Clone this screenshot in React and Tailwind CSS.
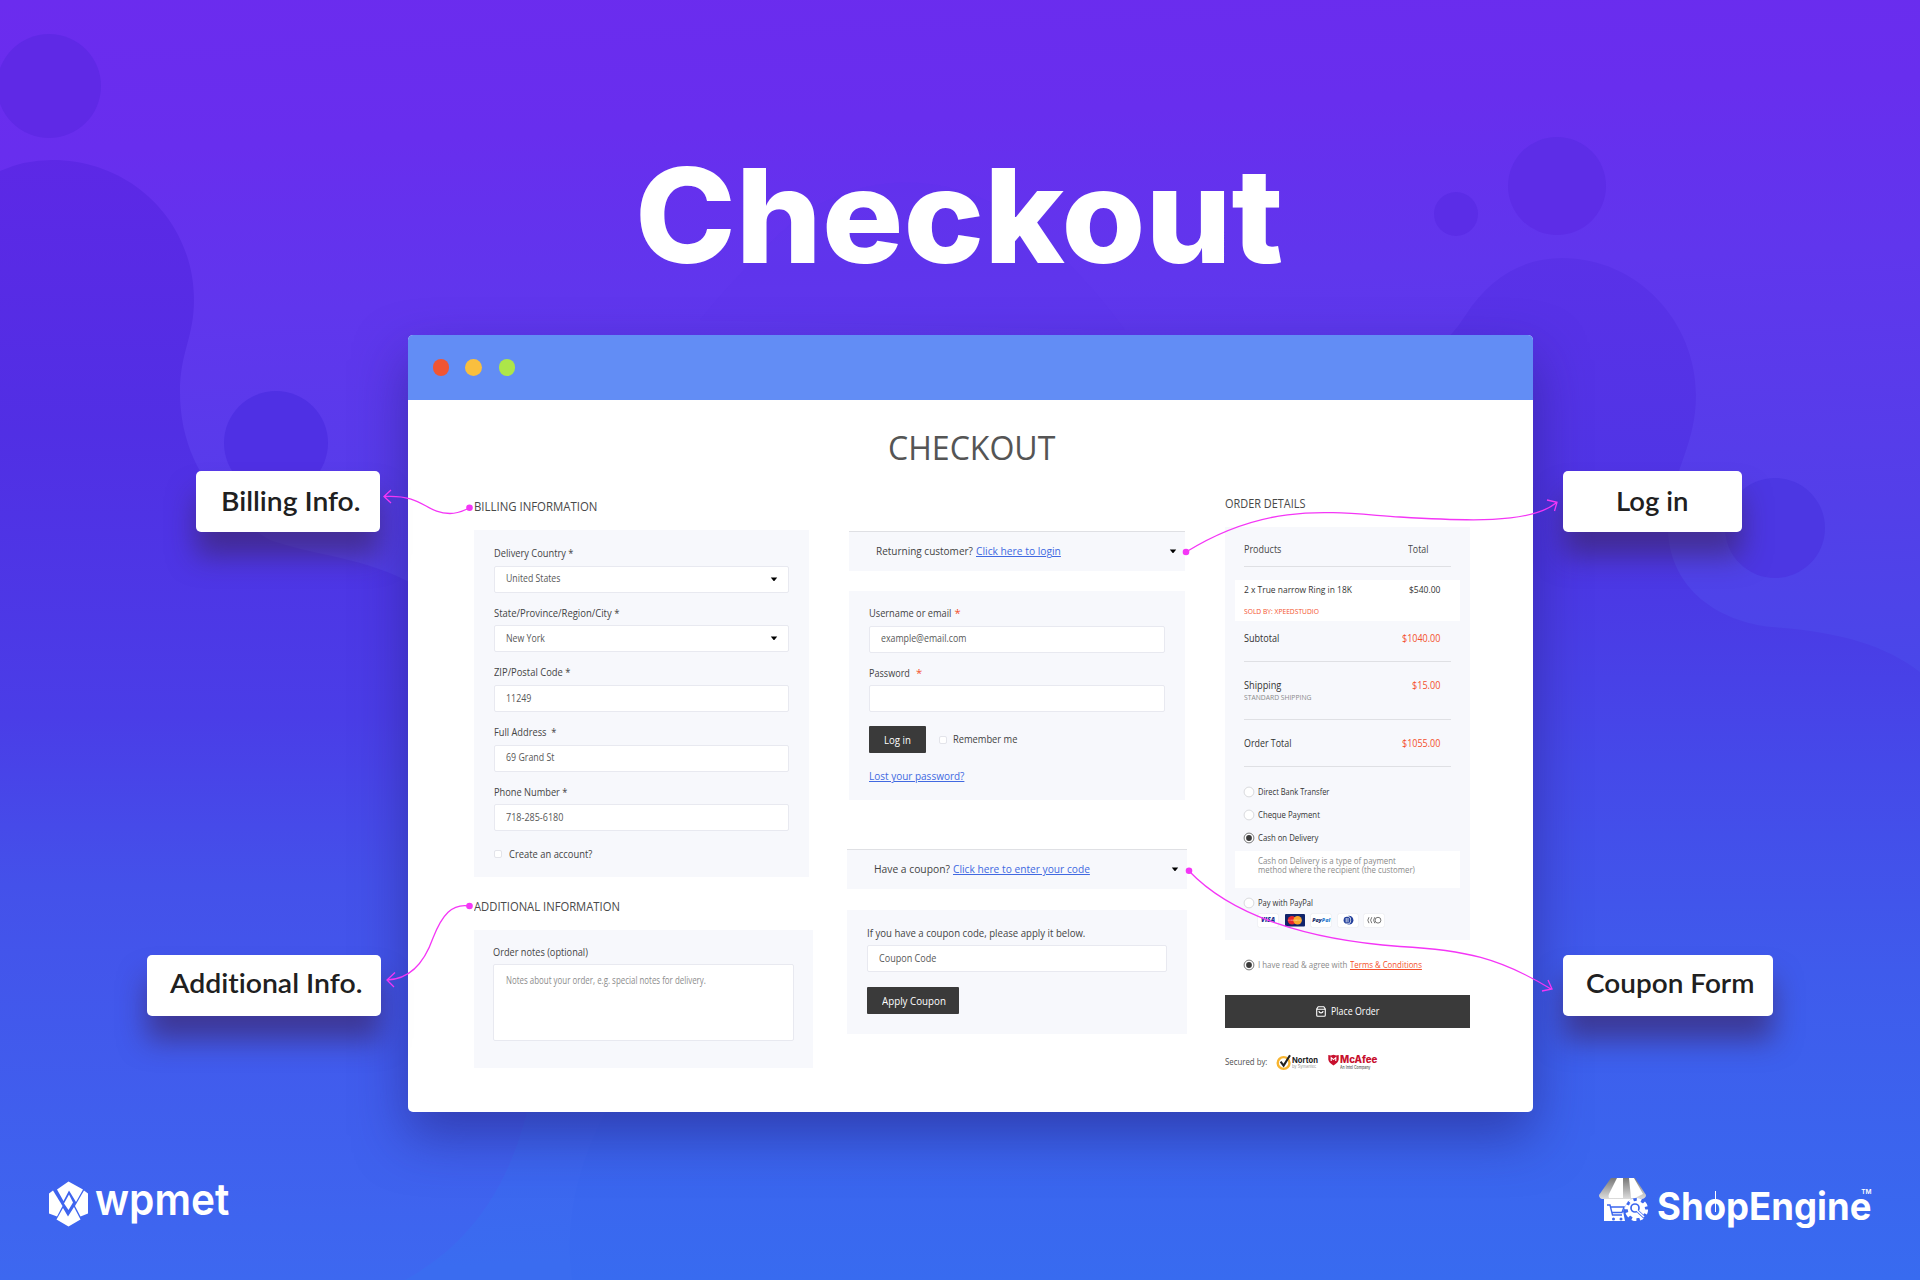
import { useLayoutEffect, useRef } from "react";

const SANS = "font-['Open_Sans','Noto_Sans',sans-serif]";

// One line of text, condensed or widened so that it spans `w` pixels.
function Fit({ w, className = "", innerClass = "", children }) {
  const outer = useRef(null);
  const inner = useRef(null);
  useLayoutEffect(() => {
    const span = w - 0.6;
    inner.current.style.transform = "none";
    const natural = inner.current.getBoundingClientRect().width;
    outer.current.style.width = `${span}px`;
    inner.current.style.transform = `scaleX(${span / natural})`;
  }, [w]);
  return (
    <span ref={outer} className={`inline-block text-left whitespace-pre ${className}`}>
      <span ref={inner} className={`inline-block origin-left ${innerClass}`}>
        {children}
      </span>
    </span>
  );
}

function Caret({ className = "" }) {
  return (
    <svg viewBox="0 0 8 5" className={`h-[5px] w-2 ${className}`}>
      <path d="M.8.6h6.4L4.6 3.8q-.6.6-1.2 0z" fill="#000" />
    </svg>
  );
}

function Input({ value, w, select, className = "w-[296px]" }) {
  return (
    <div
      className={`flex h-[27px] items-center rounded-[2px] border border-[#e8e9f0] bg-white pr-[10px] pl-[11px] text-[10.2px] text-[#585858] ${className}`}
    >
      {value && <Fit w={w}>{value}</Fit>}
      {select && <Caret className="ml-auto" />}
    </div>
  );
}

function Field({ label, lw, star, gap = 3, inputClass, ...rest }) {
  return (
    <div className="h-[59.7px]">
      <div className="flex h-6 items-center text-[11.2px] text-[#444]">
        <Fit w={lw}>{label}</Fit>
        {star && (
          <span className="text-[#f4512c]" style={{ marginLeft: gap }}>
            *
          </span>
        )}
      </div>
      <Input {...rest} className={inputClass} />
    </div>
  );
}

function Check({ className = "" }) {
  return <span className={`size-[8px] rounded-[2px] border border-[#e3e4ea] bg-white ${className}`} />;
}

function Toggle({ text, tw, link, lw, className = "" }) {
  return (
    <div
      className={`flex h-10 items-center border-t border-[#dfe0e4] bg-[#f7f8fc] pb-px text-[11.5px] text-[#444] ${className}`}
    >
      <Fit w={tw}>{text}</Fit>
      <Fit w={lw} className="ml-[3.5px] text-[#4169e1]" innerClass="underline underline-offset-1">
        {link}
      </Fit>
      <Caret className="mr-[8.5px] ml-auto" />
    </div>
  );
}

function Radio({ on }) {
  return (
    <svg viewBox="0 0 12 12" className="size-3 shrink-0">
      <circle cx="6" cy="6" r="4.9" fill="#fff" stroke={on ? "#555" : "#cfd0d4"} strokeWidth=".8" />
      {on && <circle cx="6" cy="6" r="2.9" fill="#3a3a3a" />}
    </svg>
  );
}

function PayOption({ label, w, on }) {
  return (
    <div className="flex h-[23px] items-center gap-[3px] pl-[18px] text-[9.8px] text-[#333]">
      <Radio on={on} />
      <Fit w={w} className="pt-[1px]">
        {label}
      </Fit>
    </div>
  );
}

function Amount({ w, children }) {
  return (
    <Fit w={w} className="mr-[11px] text-[#f4512c]">
      {children}
    </Fit>
  );
}

function LeftColumn() {
  return (
    <section className="w-[339px]">
      <h2 className="flex h-[25px] items-center text-[12.8px] text-[#484848]">
        <Fit w={124}>BILLING INFORMATION</Fit>
      </h2>
      <div className="mt-[11px] h-[347px] w-[335px] bg-[#f7f8fc] pt-[11.5px] pl-5">
        <Field label="Delivery Country *" lw={80} value="United States" w={55} select inputClass="w-[295px]" />
        <Field label="State/Province/Region/City *" lw={126} value="New York" w={39.5} select inputClass="w-[295px]" />
        <Field label="ZIP/Postal Code *" lw={77} value="11249" w={26} inputClass="w-[295px]" />
        <Field label="Full Address  *" lw={63} value="69 Grand St" w={49} inputClass="w-[295px]" />
        <Field label="Phone Number *" lw={74} value="718-285-6180" w={58} inputClass="w-[295px]" />
        <div className="flex h-7 items-center gap-[6.5px] text-[11.2px] text-[#444]">
          <Check />
          <Fit w={84}>Create an account?</Fit>
        </div>
      </div>
      <h2 className="flex h-[53px] items-center pt-[6px] text-[12.8px] text-[#484848]">
        <Fit w={146.5}>ADDITIONAL INFORMATION</Fit>
      </h2>
      <div className="h-[138px] bg-[#f7f8fc] pt-[11px] pl-[19px]">
        <div className="flex h-[23px] items-center text-[11.2px] text-[#444]">
          <Fit w={95.5}>Order notes (optional)</Fit>
        </div>
        <div className="h-[77px] w-[301px] rounded-[2px] border border-[#e8e9f0] bg-white pt-[5px] pl-[12px] text-[10px] leading-5 text-[#8c8c8c]">
          <Fit w={200.5}>Notes about your order, e.g. special notes for delivery.</Fit>
        </div>
      </div>
    </section>
  );
}

function MiddleColumn() {
  return (
    <section className="ml-[34px] w-[340px] pt-[37px]">
      <Toggle
        text="Returning customer?"
        tw={97.5}
        link="Click here to login"
        lw={85.5}
        className="mx-[2px] pl-[26.5px]"
      />
      <div className="mx-[2px] mt-5 h-[209px] bg-[#f7f8fc] pt-[10.5px] pl-5">
        <Field label="Username or email" lw={83} star value="example@email.com" w={86} inputClass="w-[296px]" />
        <Field label="Password" lw={41.5} star gap={6} inputClass="w-[296px]" />
        <div className="mt-[5.4px] flex h-[26.5px] items-center text-[11.2px] text-[#444]">
          <button className="h-full w-[57px] rounded-[1px] bg-[#3a3a3a] text-[11.4px] text-white">
            <Fit w={27.5}>Log in</Fit>
          </button>
          <Check className="mr-[6px] ml-[13px]" />
          <Fit w={65}>Remember me</Fit>
        </div>
        <div className="flex h-[46px] items-center text-[11.4px] text-[#4169e1]">
          <Fit w={96} innerClass="underline underline-offset-1">
            Lost your password?
          </Fit>
        </div>
      </div>
      <Toggle
        text="Have a coupon?"
        tw={76.5}
        link="Click here to enter your code"
        lw={137.5}
        className="mt-[49px] pl-[27px]"
      />
      <div className="mt-[20.5px] h-[124px] bg-[#f7f8fc] pt-[11.5px] pl-[20px]">
        <div className="flex h-6 items-center text-[11.2px] text-[#444]">
          <Fit w={219}>If you have a coupon code, please apply it below.</Fit>
        </div>
        <Input value="Coupon Code" w={58} className="w-[300px]" />
        <button className="mt-[15px] h-[26.5px] w-[92px] rounded-[1px] bg-[#3a3a3a] pl-[2px] text-[11.4px] text-white">
          <Fit w={64.5}>Apply Coupon</Fit>
        </button>
      </div>
    </section>
  );
}

function Cards() {
  const card = "h-[12.5px] w-[20px] rounded-[1px] bg-white shadow-[0_0_1px_rgba(0,0,0,0.25)]";
  return (
    <div className="ml-[33px] flex gap-[6.6px]">
      <span
        className={`${card} flex items-center justify-center font-['Open_Sans',sans-serif] text-[6.4px] leading-none font-extrabold text-[#1a2f8f] italic`}
      >
        VISA
      </span>
      <svg viewBox="0 0 20 12.5" className="h-[12.5px] w-[20px]">
        <rect width="20" height="12.5" rx="1" fill="#10246b" />
        <circle cx="7" cy="6.2" r="4.3" fill="#e8252c" />
        <circle cx="12.6" cy="6.2" r="4.3" fill="#f9a72b" />
        <path d="M3.4 6.2h12" stroke="#fff" strokeWidth="1" strokeDasharray=".8 .5" opacity=".6" />
      </svg>
      <span
        className={`${card} flex items-center justify-center font-['Open_Sans',sans-serif] text-[5.4px] leading-none font-extrabold text-[#22316c] italic`}
      >
        Pay<span className="text-[#2f7fd0]">Pal</span>
      </span>
      <svg viewBox="0 0 20 12.5" className={card}>
        <circle cx="11" cy="6.2" r="4.4" fill="#24419c" />
        <circle cx="9" cy="6.2" r="4.1" fill="#fff" />
        <circle cx="9" cy="6.2" r="3.4" fill="#24419c" />
        <path d="M8.2 4v4.4M10 4v4.4" stroke="#fff" strokeWidth=".8" />
      </svg>
      <svg viewBox="0 0 20 12.5" className={card}>
        <g fill="none" stroke="#666" strokeWidth=".9">
          <path d="M5 3.2q-2.4 3 0 6M7.8 3.2q-2.4 3 0 6M10.8 3.2q-2.4 3 0 6" />
          <circle cx="14" cy="6.2" r="2.9" />
        </g>
      </svg>
    </div>
  );
}

function Norton() {
  return (
    <div className="flex items-center">
      <svg viewBox="0 0 17 17" className="size-[17px]">
        <circle cx="7.6" cy="9" r="5.9" fill="none" stroke="#f8b530" strokeWidth="2.4" />
        <path d="M4.6 7.6l3 4L14 1.2" fill="none" stroke="#222" strokeWidth="2.1" />
      </svg>
      <div className="-ml-[1px] flex flex-col items-start font-['Inter',sans-serif]">
        <Fit w={26.5} className="text-[8.2px] leading-[8px] font-bold text-[#222]">
          Norton
        </Fit>
        <Fit w={25} className="text-[4.4px] leading-[5px] text-[#999]">
          by Symantec
        </Fit>
      </div>
    </div>
  );
}

function McAfee() {
  return (
    <div className="ml-[10px] flex items-start">
      <svg viewBox="0 0 11 12" className="h-[12px] w-[11px]">
        <path d="M.3 1l2.600.6L5.500.8l2.600.8L10.700 1v4.600q-.6 3.400-5.200 5.800Q.9 9 .3 5.600z" fill="#c8102e" />
        <path d="M3.2 7V3.600l2.300 2 2.300-2V7" fill="none" stroke="#fff" strokeWidth="1.1" />
      </svg>
      <div className="ml-[1.5px] flex flex-col items-start font-['Inter',sans-serif]">
        <Fit w={38} className="text-[9.8px] leading-[11px] font-extrabold text-[#c8102e]">
          McAfee
        </Fit>
        <Fit w={31} className="text-[4.2px] leading-[5px] font-medium text-[#555]">
          An Intel Company
        </Fit>
      </div>
    </div>
  );
}

function RightColumn() {
  return (
    <section className="ml-[38px] w-[245px]">
      <h2 className="flex h-5 items-center text-[11.8px] text-[#484848]">
        <Fit w={81}>ORDER DETAILS</Fit>
      </h2>
      <div className="mt-[13px] h-[413px] bg-[#f7f8fc] pt-[5px] text-[10.8px] text-[#333]">
        <div className="mx-[19px] flex h-[35px] items-center justify-between border-b border-[#dfe0e4] text-[#484848]">
          <Fit w={38}>Products</Fit>
          <Fit w={21} className="mr-[22.5px]">
            Total
          </Fit>
        </div>
        <div className="mx-[10px] mt-[13px] h-[41px] bg-white px-[9px] pt-[2px]">
          <div className="flex justify-between text-[9.8px] leading-[15px]">
            <Fit w={108.5}>2 x True narrow Ring in 18K</Fit>
            <Fit w={32} className="mr-[11px]">
              $540.00
            </Fit>
          </div>
          <div className="mt-[8px] flex text-[7.8px] leading-[12px] text-[#f4512c]">
            <Fit w={75.5}>SOLD BY: XPEEDSTUDIO</Fit>
          </div>
        </div>
        <div className="mx-[19px] flex h-[41px] items-start justify-between border-b border-[#dfe0e4] pt-[6.6px] leading-5">
          <Fit w={36}>Subtotal</Fit>
          <Amount w={39}>$1040.00</Amount>
        </div>
        <div className="mx-[19px] h-[58px] border-b border-[#dfe0e4] pt-[15.7px] leading-[14px]">
          <div className="flex justify-between">
            <Fit w={38}>Shipping</Fit>
            <Amount w={29}>$15.00</Amount>
          </div>
          <div className="flex text-[7.6px] leading-[11px] text-[#8a8a8a]">
            <Fit w={68}>STANDARD SHIPPING</Fit>
          </div>
        </div>
        <div className="mx-[19px] flex h-[47px] items-center justify-between border-b border-[#dfe0e4]">
          <Fit w={48}>Order Total</Fit>
          <Amount w={39}>$1055.00</Amount>
        </div>
        <div className="mt-[13px]">
          <PayOption label="Direct Bank Transfer" w={72} />
          <PayOption label="Cheque Payment" w={62.5} />
          <PayOption label="Cash on Delivery" w={61} on />
        </div>
        <div className="mx-[10px] mt-[2px] flex h-[37px] flex-col items-start bg-white pt-[4.5px] pl-[23px] text-[9.2px] leading-[9.2px] text-[#8a8a8a]">
          <Fit w={138.5}>Cash on Delivery is a type of payment</Fit>
          <Fit w={157.5}>method where the recipient (the customer)</Fit>
        </div>
        <div className="mt-[3px]">
          <PayOption label="Pay with PayPal" w={55.5} />
        </div>
        <Cards />
      </div>
      <div className="flex h-[50px] items-center gap-[3px] pl-[18px] text-[9.6px] text-[#8a8a8a]">
        <Radio on />
        <span className="flex gap-[2.5px] pt-[1px]">
          <Fit w={90}>I have read &amp; agree with</Fit>
          <Fit w={72.5} className="text-[#f4512c]" innerClass="underline underline-offset-1">
            Terms &amp; Conditions
          </Fit>
        </span>
      </div>
      <button className="mt-[5px] flex h-[33px] w-full items-center justify-center gap-[5.5px] bg-[#3a3a3a] text-[10.4px] text-white">
        <svg viewBox="0 0 10 11" className="h-[11px] w-[10px]" fill="none" stroke="#fff" strokeWidth="1.1">
          <path d="M2.2.8h5.600L9.300 3v6.200q0 1-1 1H1.700q-1 0-1-1V3zM.9 3.200h8.200M3 5q0 1.900 2 1.900T7 5" />
        </svg>
        <Fit w={49}>Place Order</Fit>
      </button>
      <div className="mt-6 flex h-5 items-center text-[9.8px] text-[#505050]">
        <Fit w={43} className="pt-px">
          Secured by:
        </Fit>
        <span className="ml-[8.5px]">
          <Norton />
        </span>
        <McAfee />
      </div>
    </section>
  );
}

function BrowserWindow() {
  return (
    <main
      className={`mt-[48px] ml-[408px] h-[777px] w-[1125px] overflow-hidden rounded-[5px] bg-white ${SANS}`}
    >
      <div className="flex h-[65px] items-center bg-[#628df5] pl-[24.5px]">
        <span className="size-[16.6px] rounded-full bg-[#f15533]" />
        <span className="ml-[16px] size-[16.6px] rounded-full bg-[#f9bf3e]" />
        <span className="ml-[17px] size-[16.6px] rounded-full bg-[#ade649]" />
      </div>
      <h1 className="flex h-[94px] items-center justify-center pl-[3px] text-[33.5px] text-[#555]">
        <Fit w={168}>CHECKOUT</Fit>
      </h1>
      <div className="flex items-start pl-[66px]">
        <LeftColumn />
        <MiddleColumn />
        <RightColumn />
      </div>
    </main>
  );
}

function Callout({ w, className, children }) {
  return (
    <div
      className={`absolute flex items-center justify-center rounded-[5px] bg-white font-['Lato',sans-serif] text-[27px] font-semibold text-[#202020] shadow-[0_24px_28px_rgba(60,38,105,0.65)] [font-variant-ligatures:none] ${className}`}
    >
      <Fit w={w}>{children}</Fit>
    </div>
  );
}

function Background() {
  return (
    <svg viewBox="0 0 1920 1280" className="absolute inset-0 h-full w-full">
      <defs>
        <linearGradient id="sky" x1="0" y1="0" x2=".06" y2="1">
          <stop offset="0" stopColor="#6b2cee" />
          <stop offset=".12" stopColor="#682eee" />
          <stop offset=".25" stopColor="#6036ed" />
          <stop offset=".45" stopColor="#533fe9" />
          <stop offset=".6" stopColor="#4848e9" />
          <stop offset=".75" stopColor="#4259ed" />
          <stop offset="1" stopColor="#3a6cf0" />
        </linearGradient>
        <linearGradient id="blob" gradientUnits="userSpaceOnUse" x1="0" y1="150" x2="0" y2="1280">
          <stop offset="0" stopColor="#5d28e6" />
          <stop offset=".25" stopColor="#512fe4" />
          <stop offset=".5" stopColor="#4a3de7" />
          <stop offset=".65" stopColor="#4451ea" />
          <stop offset="1" stopColor="#3d68f0" />
        </linearGradient>
        <linearGradient id="blobRight" gradientUnits="userSpaceOnUse" x1="0" y1="250" x2="0" y2="1280">
          <stop offset="0" stopColor="#5a31e8" />
          <stop offset=".3" stopColor="#4c36e4" />
          <stop offset=".5" stopColor="#4549e9" />
          <stop offset=".7" stopColor="#3f5bec" />
          <stop offset="1" stopColor="#386bf0" />
        </linearGradient>
      </defs>
      <rect width="1920" height="1280" fill="url(#sky)" />
      <path d="M700 320Q740 270 800 215Q905 150 1015 215Q1075 262 1125 330z" fill="#5c35ec" opacity=".25" />
      <path
        d="M0 171Q24 160 52 160C132 160 194 222 194 300C194 338 180 352 180 392C180 460 218 510 270 540C330 560 370 556 430 594C560 680 560 1000 527 1112C505 1200 460 1250 405 1280H0z"
        fill="url(#blob)"
      />
      <path
        d="M1390 380Q1440 355 1465 316C1490 276 1525 258 1562 258C1638 258 1696 322 1696 395C1696 450 1668 475 1668 530C1670 590 1720 622 1772 627C1840 632 1885 645 1920 672V1280H572Q560 1200 605 1112L1390 900z"
        fill="url(#blobRight)"
      />
      <circle cx="49" cy="86" r="52" fill="#5f29e6" />
      <circle cx="276" cy="443" r="52" fill="#4f30e4" />
      <circle cx="1557" cy="186" r="49" fill="#5d2de7" />
      <circle cx="1456" cy="214" r="22" fill="#5b2de7" />
      <circle cx="1775" cy="528" r="50" fill="#4c37e3" />
    </svg>
  );
}

function Connectors() {
  return (
    <svg
      viewBox="0 0 1920 1280"
      className="pointer-events-none absolute inset-0 h-full w-full"
      fill="none"
      stroke="#f436f6"
      strokeWidth="1.3"
    >
      <path d="M384 496.5C424 494 425 513.5 450 513.5C460 513.5 464 510 469.5 508M391 490l-7 6.500 7 6.500" />
      <path d="M1186 552C1270 500 1335 513 1400 517S1530 524 1556 503M1547 500l10 2.300-2.500 8.700" />
      <path d="M1189 871C1232 916 1308 940 1400 946.5C1465 950 1500 958 1551 989M1542 991l10-2-4-9" />
      <path d="M387 980C415 979 427 955 433 938C442 915 452 903 469.5 906M395 972.5l-8 7.500 7 7" />
      <g fill="#f436f6" stroke="none">
        <circle cx="469.5" cy="507.7" r="3.3" />
        <circle cx="1186" cy="552" r="3.3" />
        <circle cx="1189" cy="870.7" r="3.3" />
        <circle cx="469.5" cy="906" r="3.3" />
      </g>
    </svg>
  );
}

function Wpmet() {
  return (
    <div className="flex items-center text-white">
      <svg viewBox="0 0 39 46" className="h-[46px] w-[39px]">
        <path d="M19.5.5 34 8.500 27 21 20 9.500 14.500 20 8 8.500z" fill="#fff" />
        <path d="M0 12.500 4 9.500 13.500 25 8 35.500 0 32.500z" fill="#fff" />
        <path d="M39 12.500 35 9.500 26 25 31.500 35.500 39 32.500z" fill="#fff" />
        <path d="M15 22.500 20 13.500 24 21.500 19.500 29z" fill="#fff" />
        <path d="M19.500 45.500 7.500 38.500 14 27 19 35.500 25 26 31.500 38.500z" fill="#fff" />
      </svg>
      <Fit w={135} className="-mt-[10px] ml-[7px] font-['Inter',sans-serif] text-[44px] leading-[46px] font-semibold">
        wpmet
      </Fit>
    </div>
  );
}

function ShopEngine() {
  return (
    <div className="flex items-start text-white">
      <svg viewBox="0 0 50 44" className="h-[44px] w-[50px]">
        <defs>
          <linearGradient id="awning" x1="0" y1="0" x2="0" y2="1">
            <stop offset="0" stopColor="#777" />
            <stop offset="1" stopColor="#ddd" />
          </linearGradient>
        </defs>
        <path d="M12 0h24l11 17q0 3-4 4H3q-3-1-3-4z" fill="url(#awning)" />
        <path d="M18 0h6v20H10q-1-2 0-4zM30 0h5l9 16-8 4h-4z" fill="#fff" />
        <path d="M5 21h36v6H28l-4 6 2 10H5z" fill="#fff" />
        <g fill="none" stroke="#3d67ee" strokeWidth="1.4">
          <path d="M8 27h3l2.500 10H23M11.500 29H25l-2 5.500H13" />
        </g>
        <circle cx="14.5" cy="41" r="1.5" fill="#3d67ee" />
        <circle cx="22" cy="41" r="1.5" fill="#3d67ee" />
        <circle cx="37.5" cy="31.5" r="11.5" fill="#3d67ee" />
        <circle cx="37.5" cy="31.5" r="8.7" fill="#fff" />
        <circle cx="37.5" cy="31.5" r="9.6" fill="none" stroke="#fff" strokeWidth="4" strokeDasharray="4.3 3.24" />
        <circle cx="36" cy="30" r="4" fill="none" stroke="#3d67ee" strokeWidth="1.7" />
        <path d="M39 33.5l7 6.500" stroke="#3d67ee" strokeWidth="3" />
        <path d="M37 31.5l8 7.500" stroke="#fff" strokeWidth="1.5" />
      </svg>
      <div className="relative ml-[8px] pt-[13px] font-['Inter',sans-serif]">
        <Fit w={215} className="text-[38.5px] leading-[30px] font-bold">
          ShopEngine
        </Fit>
        <span className="absolute top-[12.5px] left-[57.5px] h-[21px] w-px bg-white" />
        <span className="absolute top-[11px] right-0 text-[6.5px] leading-[6px] font-semibold">TM</span>
      </div>
    </div>
  );
}

export default function App() {
  return (
    <div className="relative h-[1280px] w-[1920px] overflow-hidden bg-[#4f3fe8]">
      <Background />
      <div className="relative">
        <header className="flex h-[287px] items-end justify-center pr-[2px]">
          <Fit
            w={649}
            className="font-['Inter',sans-serif] text-[131px] leading-[142px] font-extrabold text-white"
          >
            Checkout
          </Fit>
        </header>
        <div className="absolute top-[335px] left-[408px] h-[777px] w-[1125px] rounded-[5px] shadow-[0_24px_52px_rgba(35,30,120,0.5)]" />
        <div className="relative">
          <BrowserWindow />
        </div>
        <footer className="mt-[66px] flex items-start justify-between pr-[48.5px] pl-[49px]">
          <div className="pt-[3px]">
            <Wpmet />
          </div>
          <ShopEngine />
        </footer>
      </div>
      <Callout w={140} className="top-[471px] left-[196px] h-[61px] w-[184px] pb-px pl-[5px]">
        Billing Info.
      </Callout>
      <Callout w={193} className="top-[955px] left-[147px] h-[61px] w-[234px] pb-[5px] pl-[4px]">
        Additional Info.
      </Callout>
      <Callout w={73} className="top-[471px] left-[1563px] h-[61px] w-[179px] pb-px">
        Log in
      </Callout>
      <Callout w={169} className="top-[955px] left-[1563px] h-[61px] w-[210px] pb-[5px] pl-[4px]">
        Coupon Form
      </Callout>
      <Connectors />
    </div>
  );
}
